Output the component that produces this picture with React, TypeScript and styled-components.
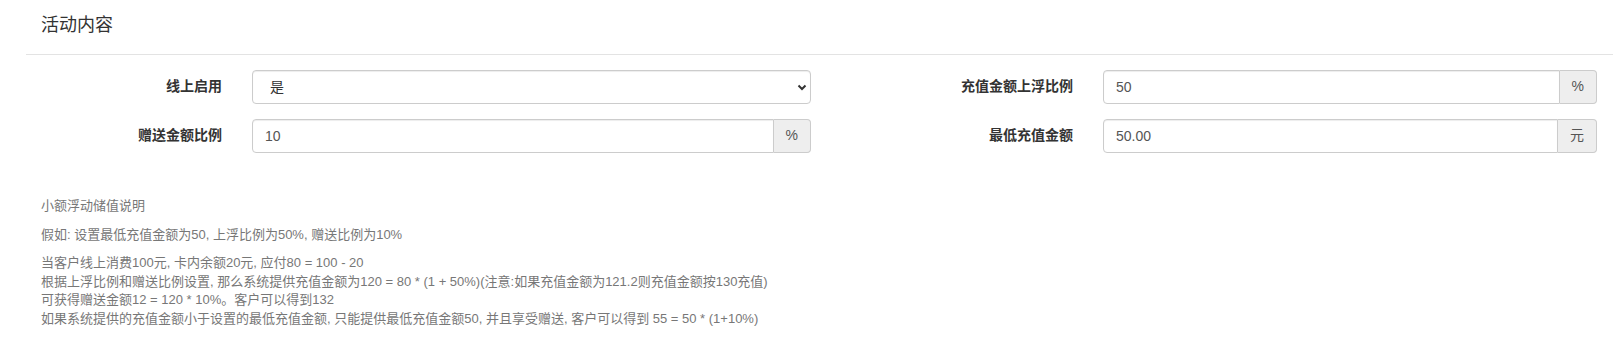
import React from 'react';
import styled, { createGlobalStyle } from 'styled-components';

const GlobalStyle = createGlobalStyle`
  html, body {
    margin: 0;
    padding: 0;
    background: #fff;
  }
  body {
    font-family: "Liberation Sans", "Noto Sans CJK SC", Arial, sans-serif;
    font-size: 14px;
    line-height: 1.42857;
    color: #333;
  }
  * {
    box-sizing: border-box;
  }
`;

const Page = styled.div`
  padding-left: 26px;
`;

const Header = styled.div`
  padding: 15px 15px 19px;
  font-size: 18px;
  line-height: 20px;
  color: #333;
  border-bottom: 1px solid #e3e3e3;
`;

const FormGrid = styled.div`
  display: grid;
  grid-template-columns: 226px 559px 292px 494px;
  row-gap: 15px;
  align-items: center;
  padding-top: 15px;
`;

const Label = styled.label`
  padding-right: 30px;
  text-align: right;
  font-weight: bold;
  font-size: 14px;
  color: #333;
`;

const SelectWrap = styled.div`
  position: relative;
  height: 34px;
`;

const Select = styled.select`
  appearance: none;
  width: 100%;
  height: 34px;
  padding: 6px 24px 6px 17px;
  font-family: inherit;
  font-size: 14px;
  color: #333;
  background: #fff;
  border: 1px solid #ccc;
  border-radius: 4px;
  box-shadow: inset 0 1px 1px rgba(0, 0, 0, 0.075);
  outline: none;
`;

const Chevron = styled.svg`
  position: absolute;
  right: 4px;
  top: 14px;
  pointer-events: none;
`;

const InputGroup = styled.div`
  display: flex;
  height: 34px;
`;

const Input = styled.input`
  flex: 1;
  min-width: 0;
  height: 34px;
  padding: 6px 12px;
  font-family: inherit;
  font-size: 14px;
  color: #555;
  background: #fff;
  border: 1px solid #ccc;
  border-radius: 4px 0 0 4px;
  box-shadow: inset 0 1px 1px rgba(0, 0, 0, 0.075);
  outline: none;
`;

const Addon = styled.span`
  display: flex;
  align-items: center;
  justify-content: center;
  padding: 6px 12px;
  font-size: 14px;
  color: #555;
  background: #eee;
  border: 1px solid #ccc;
  border-left: 0;
  border-radius: 0 4px 4px 0;
`;

const Notes = styled.div`
  padding: 0 15px;
  margin-top: 44px;
  font-size: 13px;
  line-height: 1.42857;
  color: #777;

  p {
    margin: 0 0 10px;
  }
`;

const AddonInput = ({ value, unit }: { value: string; unit: string }) => (
  <InputGroup>
    <Input defaultValue={value} />
    <Addon>{unit}</Addon>
  </InputGroup>
);

export default function App() {
  return (
    <Page>
      <GlobalStyle />
      <Header>活动内容</Header>
      <FormGrid>
        <Label>线上启用</Label>
        <SelectWrap>
          <Select defaultValue="1">
            <option value="1">是</option>
            <option value="0">否</option>
          </Select>
          <Chevron width="10" height="7" viewBox="0 0 10 7">
            <path d="M1.5 1.5 L5 5 L8.5 1.5" fill="none" stroke="#333" strokeWidth="2" />
          </Chevron>
        </SelectWrap>
        <Label>充值金额上浮比例</Label>
        <AddonInput value="50" unit="%" />

        <Label>赠送金额比例</Label>
        <AddonInput value="10" unit="%" />
        <Label>最低充值金额</Label>
        <AddonInput value="50.00" unit="元" />
      </FormGrid>
      <Notes>
        <p>小额浮动储值说明</p>
        <p>假如: 设置最低充值金额为50, 上浮比例为50%, 赠送比例为10%</p>
        <p>
          当客户线上消费100元, 卡内余额20元, 应付80 = 100 - 20
          <br />
          根据上浮比例和赠送比例设置, 那么系统提供充值金额为120 = 80 * (1 + 50%)(注意:如果充值金额为121.2则充值金额按130充值)
          <br />
          可获得赠送金额12 = 120 * 10%。客户可以得到132
          <br />
          如果系统提供的充值金额小于设置的最低充值金额, 只能提供最低充值金额50, 并且享受赠送, 客户可以得到 55 = 50 * (1+10%)
        </p>
      </Notes>
    </Page>
  );
}
